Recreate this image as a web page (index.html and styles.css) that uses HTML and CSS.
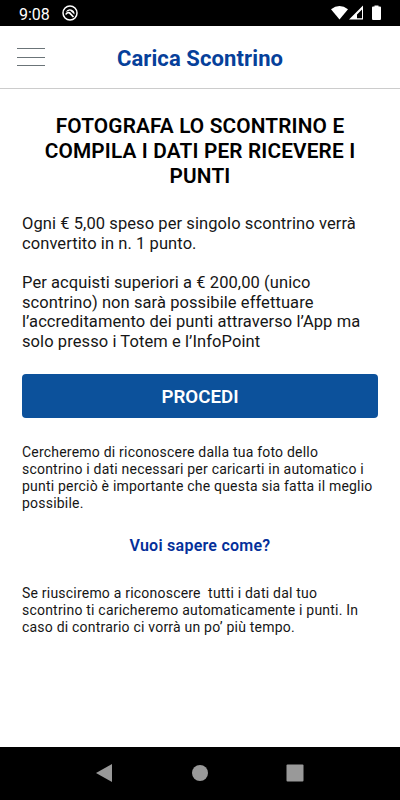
FILE: index.html
```html
<!DOCTYPE html>
<html lang="it">
<head>
    <meta charset="UTF-8">
    <meta name="viewport" content="width=device-width, initial-scale=1.0">
    <title>Carica Scontrino</title>
    <link rel="stylesheet" href="styles.css">
</head>
<body>
    <div class="status-bar">
        <span class="clock">9:08</span>
        <svg class="notification" width="16" height="16" viewBox="0 0 16 16">
            <circle cx="8" cy="8" r="7" fill="none" stroke="#fff" stroke-width="1.500"/>
            <path d="M3.800 7A4.600 4.600 0 0 1 12.500 9.500L8 5.500z" fill="#fff"/>
            <path d="M3.800 9.500Q5 6.800 7.500 7.800L11.500 12" fill="none" stroke="#fff" stroke-width="1.700"/>
        </svg>
        <svg class="system-icons" width="50" height="16" viewBox="0 0 50 16">
            <path d="M0 4.300Q8.500-2.300 17 4.300L8.500 14.500z" fill="#fff"/>
            <path d="M32 .5v14H18zM31 4.500L26 9.500v3.800h5z" fill="#fff" fill-rule="evenodd"/>
            <path d="M42 1.500h1.500V.5h4v1H49q1 0 1 1v11q0 1.500-1 1.500h-7q-1 0-1-1.500v-11q0-1 1-1z" fill="#fff"/>
        </svg>
    </div>

    <header class="header">
        <button class="menu-btn" aria-label="Menu">
            <span></span>
            <span></span>
            <span></span>
        </button>
        <h1>Carica Scontrino</h1>
    </header>

    <main class="content">
        <h2>FOTOGRAFA LO SCONTRINO E<br>COMPILA I DATI PER RICEVERE I<br>PUNTI</h2>
        <p class="rules">Ogni € 5,00 speso per singolo scontrino verrà<br>convertito in n. 1 punto.</p>
        <p class="rules">Per acquisti superiori a € 200,00 (unico<br>scontrino) non sarà possibile effettuare<br>l’accreditamento dei punti attraverso l’App ma<br>solo presso i Totem e l’InfoPoint</p>
        <button class="proceed-btn">PROCEDI</button>
        <p class="note">Cercheremo di riconoscere dalla tua foto dello<br>scontrino i dati necessari per caricarti in automatico i<br>punti perciò è importante che questa sia fatta il meglio<br>possibile.</p>
        <a class="how-link">Vuoi sapere come?</a>
        <p class="note">Se riusciremo a riconoscere&nbsp; tutti i dati dal tuo<br>scontrino ti caricheremo automaticamente i punti. In<br>caso di contrario ci vorrà un po’ più tempo.</p>
    </main>

    <nav class="nav-bar">
        <svg width="18" height="20" viewBox="0 0 18 20"><path d="M16 1v18L0 10z"/></svg>
        <svg width="16" height="18" viewBox="0 0 16 18"><circle cx="8" cy="9" r="8"/></svg>
        <svg width="18" height="18" viewBox="0 0 18 18"><rect x="0.5" y="0.5" width="17" height="17" rx="1"/></svg>
    </nav>
</body>
</html>
```
FILE: styles.css
```css
* {
    box-sizing: border-box;
}
body {
    margin: 0;
    height: 800px;
    display: flex;
    flex-direction: column;
    background-color: #fff;
    color: #161616;
    font-family: Roboto, sans-serif;
}
button {
    border: none;
    font-family: inherit;
    cursor: pointer;
}
.status-bar {
    height: 26px;
    padding: 0 19px;
    display: flex;
    align-items: center;
    background-color: #000;
    color: #fff;
}
.clock {
    width: 43px;
    padding-top: 3px;
    font-size: 16px;
    line-height: 23px;
}
.system-icons {
    margin-left: auto;
}
.header {
    height: 63px;
    padding: 0 17px;
    display: grid;
    grid-template-columns: 28px 1fr 28px;
    align-items: center;
    border-bottom: 1px solid #ccc;
}
.menu-btn {
    height: 18px;
    padding: 0;
    display: flex;
    flex-direction: column;
    justify-content: space-between;
    background: none;
}
.menu-btn span {
    width: 28px;
    height: 1px;
    background-color: #6b7478;
}
h1 {
    margin: 0;
    padding-top: 3px;
    text-align: center;
    font-size: 22px;
    font-weight: 700;
    letter-spacing: 0.1px;
    line-height: 26px;
    color: #06409a;
}
.content {
    flex: 1;
    padding: 25px 22px 0;
}
h2 {
    margin: 0 -5px 25px;
    text-align: center;
    font-size: 20.800px;
    font-weight: 600;
    letter-spacing: 0.15px;
    line-height: 25px;
    color: #000;
}
p {
    margin: 0;
    white-space: nowrap;
}
.rules {
    margin-bottom: 20px;
    font-size: 16.500px;
    letter-spacing: 0.08px;
    line-height: 19.600px;
}
.proceed-btn {
    width: 100%;
    height: 44px;
    margin: 22px 0 26px;
    padding-top: 4px;
    display: block;
    border-radius: 4px;
    background-color: #0c519b;
    color: #fff;
    font-size: 18.700px;
    font-weight: 600;
}
.note {
    font-size: 14px;
    letter-spacing: 0.21px;
    line-height: 17px;
}
.how-link {
    margin: 24px 0 29px;
    display: block;
    text-align: center;
    font-size: 16px;
    font-weight: 600;
    letter-spacing: 0.25px;
    line-height: 20px;
    color: #04309a;
}
.nav-bar {
    height: 53px;
    padding: 0 96px 1px;
    display: flex;
    justify-content: space-between;
    align-items: center;
    background-color: #000;
    fill: #999;
}
```
